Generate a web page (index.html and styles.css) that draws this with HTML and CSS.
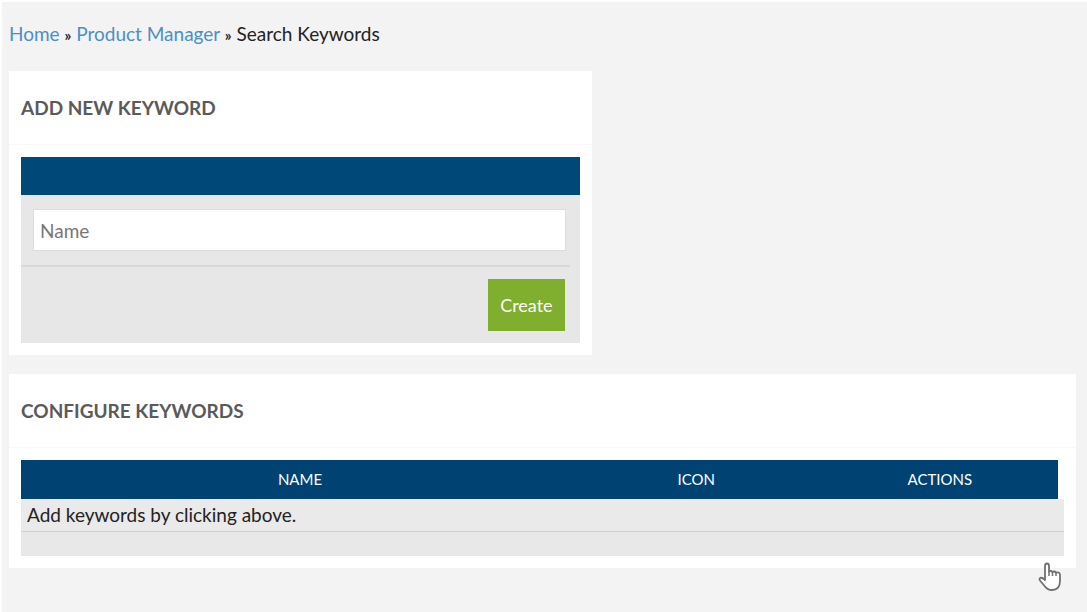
FILE: index.html
```html
<!DOCTYPE html>
<html lang="en">
<head>
    <meta charset="UTF-8">
    <meta name="viewport" content="width=device-width, initial-scale=1.0">
    <title>Search Keywords</title>
    <link rel="stylesheet" href="styles.css">
</head>
<body>
    <div class="page">
        <nav class="breadcrumb">
            <a href="#">Home</a> <span class="sep">»</span> <a href="#">Product Manager</a> <span class="sep">»</span> <span>Search Keywords</span>
        </nav>

        <section class="panel panel-add">
            <h2>ADD NEW KEYWORD</h2>
            <div class="panel-body">
                <form class="keyword-form">
                    <div class="form-head"></div>
                    <div class="form-row">
                        <input type="text" id="keyword-name" placeholder="Name" aria-label="Name">
                    </div>
                    <div class="form-actions">
                        <button type="button">Create</button>
                    </div>
                </form>
            </div>
        </section>

        <section class="panel panel-list">
            <h2>CONFIGURE KEYWORDS</h2>
            <div class="panel-body">
                <table>
                    <colgroup>
                        <col class="col-name">
                        <col class="col-icon">
                        <col class="col-actions">
                    </colgroup>
                    <thead>
                        <tr>
                            <th>NAME</th>
                            <th>ICON</th>
                            <th>ACTIONS</th>
                        </tr>
                    </thead>
                    <tbody>
                        <tr>
                            <td colspan="3">Add keywords by clicking above.</td>
                        </tr>
                    </tbody>
                    <tfoot>
                        <tr>
                            <td colspan="3"></td>
                        </tr>
                    </tfoot>
                </table>
            </div>
            <svg class="pointer" width="24" height="30" viewBox="0 0 24 30">
                <path d="M7 18 V4 Q7 1.5 9 1.5 Q11 1.5 11 4 V9.5 Q12.800 8.200 14.500 10 Q16.500 8.800 18 10.600 Q22 9.800 22 13 V19 Q22 28 14 28 Q9.500 28 7 24.500 L2 18.500 Q0.800 16.500 2.500 15.800 Q4.500 15.500 7 18 Z" fill="#fff" stroke="#707070" stroke-width="1.800" stroke-linejoin="round"/>
                <path d="M11 9.500 V14 M14.500 10 V14 M18 10.600 V14" fill="none" stroke="#707070" stroke-width="1.500"/>
            </svg>
        </section>
    </div>
</body>
</html>
```
FILE: styles.css
```css
* {
    box-sizing: border-box;
}
body {
    margin: 0;
    padding: 2px 0 0 2px;
    background-color: #fff;
    font-family: Lato, "Liberation Sans", sans-serif;
    font-size: 19px;
    line-height: 24px;
    color: #222;
}
.page {
    min-height: calc(100vh - 2px);
    padding: 20px 11px 20px 7px;
    background-color: #f3f3f3;
}
.breadcrumb {
    margin-bottom: 24px;
}
.breadcrumb a {
    color: #4b8fc9;
    text-decoration: none;
}
.breadcrumb .sep {
    font-size: 15px;
    font-weight: bold;
}
.panel {
    position: relative;
    background-color: #fff;
}
.panel-add {
    width: 54.6%;
    margin-bottom: 19px;
}
.panel h2 {
    margin: 0;
    padding: 25px 12px 24px;
    border-bottom: 1px solid #f8f8f8;
    font-size: 19px;
    line-height: 24px;
    color: #5a5a5a;
}
.panel-body {
    padding: 12px;
}
.keyword-form {
    background-color: #e7e7e7;
}
.form-head {
    height: 38px;
    background-color: #004878;
}
.form-row {
    margin-right: 10px;
    padding: 14px 4px 14px 12px;
    border-bottom: 2px solid #d8d8d8;
}
.form-row input {
    display: block;
    width: 100%;
    height: 42px;
    padding: 0 6px;
    border: 1px solid #ddd;
    background-color: #fff;
    font-family: inherit;
    font-size: 19px;
}
.form-row input::placeholder {
    color: #777;
}
.form-actions {
    display: flex;
    justify-content: flex-end;
    padding: 12px 15px 12px 12px;
}
button {
    height: 52px;
    padding: 0 12px;
    border: none;
    background-color: #80ae2e;
    color: #fff;
    font-family: inherit;
    font-size: 18px;
    cursor: pointer;
}
table {
    width: 100%;
    table-layout: fixed;
    border-collapse: separate;
    border-spacing: 0;
}
.col-name {
    width: 53.5%;
}
.col-icon {
    width: 22.5%;
}
.col-actions {
    width: 24%;
}
th {
    height: 39px;
    padding: 0 0 2px;
    background-color: #004272;
    color: #fff;
    font-size: 15px;
    font-weight: normal;
}
th:last-child {
    padding-left: 8px;
    border-right: 6px solid #fff;
}
td {
    background-color: #e8e8e8;
}
tbody td {
    height: 33px;
    padding: 0 6px;
    border-bottom: 1px solid #d0d0d0;
    background-color: #eaeaea;
}
tfoot td {
    height: 24px;
    padding: 0;
}
.pointer {
    position: absolute;
    right: 14px;
    bottom: -24px;
}
```
